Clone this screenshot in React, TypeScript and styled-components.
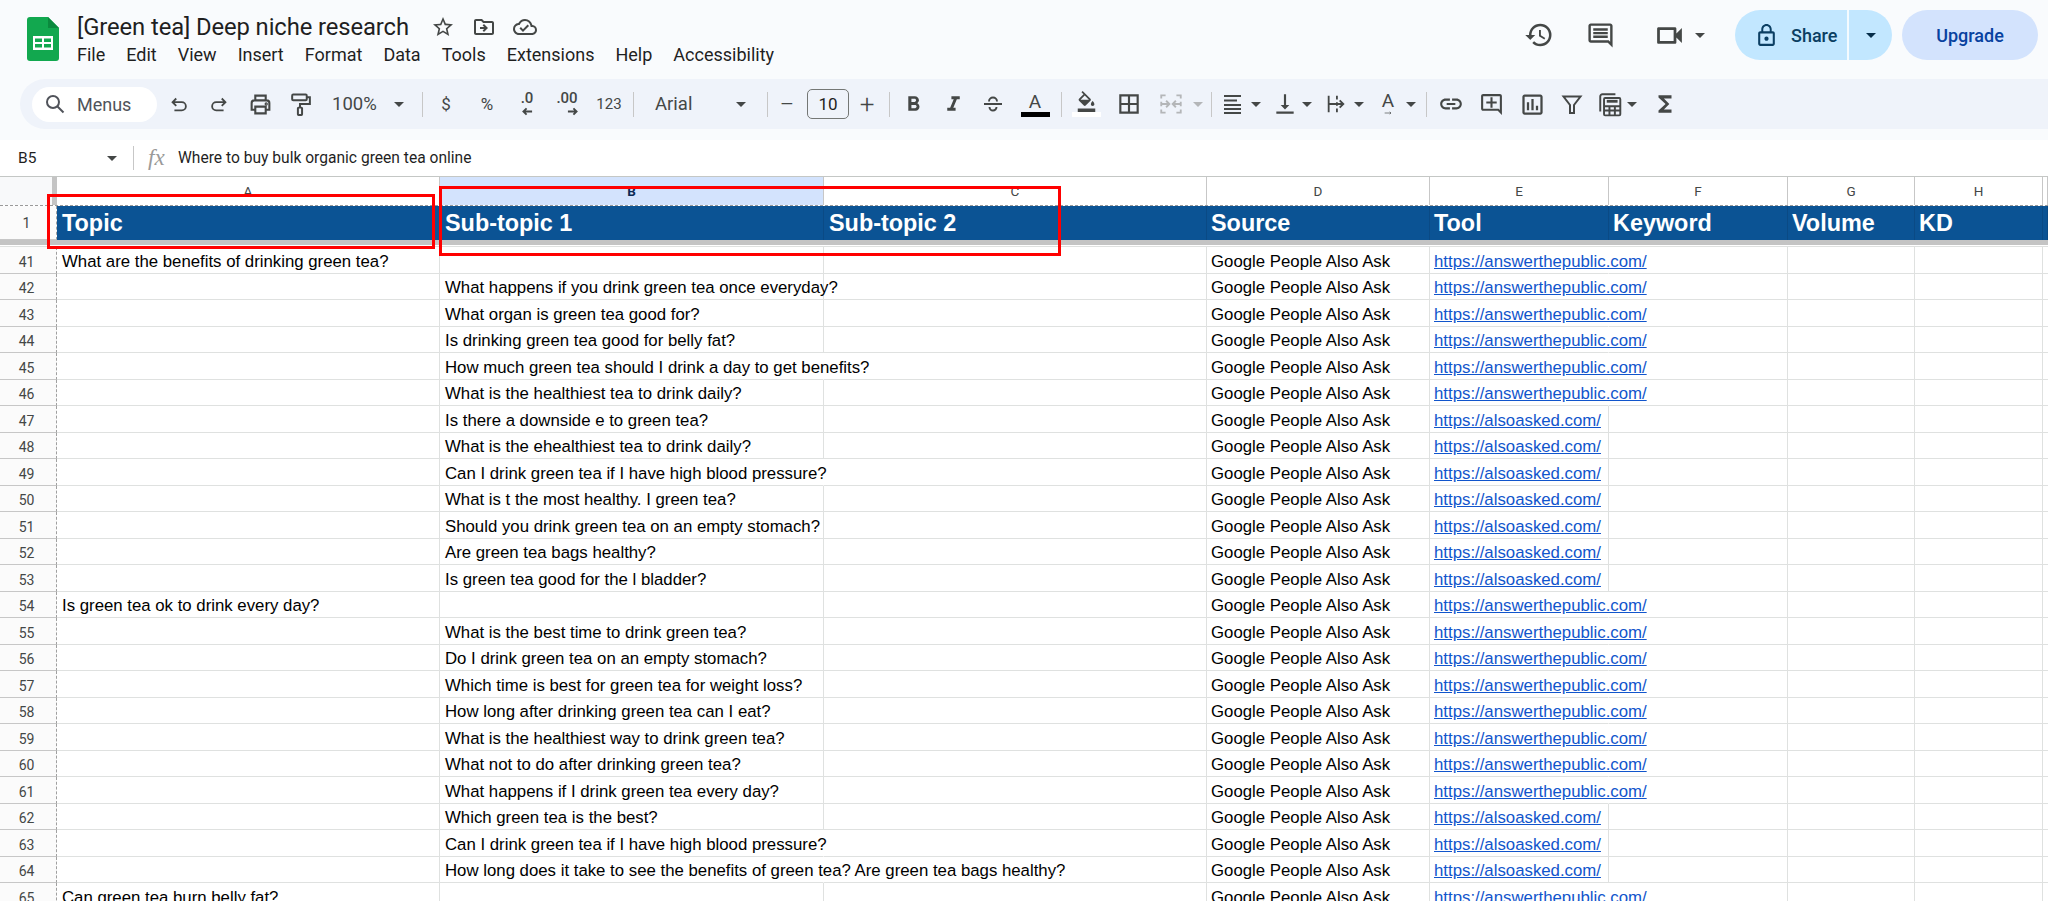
import React from "react";
import styled, { createGlobalStyle } from "styled-components";
import {
  MdOutlineStarBorder, MdOutlineDriveFileMove, MdOutlineCloudDone, MdHistory, MdOutlineComment,
  MdOutlineVideocam, MdLockOutline, MdFormatBold, MdFormatItalic, MdFormatColorFill, MdBorderAll,
  MdVerticalAlignBottom, MdLink, MdOutlineAddComment, MdOutlineInsertChart, MdFunctions,
} from "react-icons/md";

const Global = createGlobalStyle`
  html, body { margin: 0; padding: 0; background: #f9fbfd; overflow: hidden; }
  #root { height: 901px; }
  * { box-sizing: border-box; }
`;

const Page = styled.div`
  position: relative; width: 2048px; height: 901px; overflow: hidden;
  background: #f9fbfd; font-family: Roboto, "Liberation Sans", sans-serif; color: #1f1f1f;
`;
const TopBar = styled.header`
  display: flex; align-items: flex-start; height: 79px; padding: 10px 10px 0 27px;
`;
const Logo = styled.svg`margin-top: 7px; flex: none;`;
const TitleBlock = styled.div`margin: 2px 0 0 18px;`;
const TitleRow = styled.div`display: flex; align-items: center; height: 30px;`;
const Title = styled.span`font-size: 23.8px; line-height: 30px; letter-spacing: -0.1px;`;
const TitleIcons = styled.div`
  display: flex; align-items: center; gap: 17px; margin-left: 22px; color: #444746;
`;
const MenuBar = styled.nav`display: flex; gap: 21px; height: 26px; margin-top: 0; align-items: center;`;
const MenuItem = styled.span`font-size: 18px; line-height: 26px;`;
const RightCluster = styled.div`
  margin-left: auto; display: flex; align-items: center; height: 50px; color: #444746;
`;
const Action = styled.span<{ $ml?: number }>`
  display: flex; align-items: center; margin-left: ${(p) => p.$ml ?? 0}px;
`;
const SharePill = styled.div`
  display: flex; width: 157px; height: 50px; margin-left: 30px; border-radius: 25px;
  background: #c2e7ff; color: #001d35; overflow: hidden;
`;
const ShareMain = styled.div`
  display: flex; align-items: center; gap: 12px; width: 114px; padding-left: 19px;
  border-right: 2px solid #f4fbff; font-size: 18px; font-weight: 500; color: #0b3f63;
`;
const ShareCaret = styled.div`flex: 1; display: flex; align-items: center; justify-content: center;`;
const UpgradeBtn = styled.div`
  display: flex; align-items: center; justify-content: center; width: 136px; height: 50px;
  margin-left: 10px; border-radius: 25px; background: #d3e3fd; color: #0842a0;
  font-size: 18px; font-weight: 500;
`;
const Toolbar = styled.div`
  display: flex; align-items: center; height: 50px; margin: 0 0 11px 20px; padding-left: 12px;
  background: #eff3fa; border-radius: 25px 0 0 25px; color: #444746;
`;
const SearchPill = styled.div`
  display: flex; align-items: center; width: 125px; height: 35px; padding-left: 11px; gap: 10px;
  border-radius: 18px; background: #fff; font-size: 18px; color: #50535a; flex: none;
`;
const Tool = styled.div<{ $w: number }>`
  display: flex; align-items: center; justify-content: center; flex: none;
  width: ${(p) => p.$w}px; height: 36px; color: #444746;
`;
const TextTool = styled(Tool)<{ $size?: number; $thin?: boolean }>`
  font-size: ${(p) => p.$size ?? 17}px; font-weight: ${(p) => (p.$thin ? 300 : 400)};
`;
const Dropdown = styled.div<{ $w: number; $pl: number; $pr: number }>`
  display: flex; align-items: center; justify-content: space-between; flex: none;
  width: ${(p) => p.$w}px; padding: 0 ${(p) => p.$pr}px 0 ${(p) => p.$pl}px;
  font-size: 18.5px; color: #444746;
`;
const Sep = styled.div<{ $ml?: number }>`
  flex: none; width: 1px; height: 25px; background: #c7c7c7; margin-left: ${(p) => p.$ml ?? 0}px;
`;
const Caret = styled.span<{ $ml?: number; $off?: boolean; $dark?: boolean }>`
  flex: none; width: 0; height: 0; margin-left: ${(p) => p.$ml ?? 0}px; margin-right: 0;
  border-left: 5px solid transparent; border-right: 5px solid transparent;
  border-top: 5px solid ${(p) => (p.$off ? "#b4b6b8" : p.$dark ? "#062e4a" : "#444746")};
`;
const SizeBox = styled.div`
  flex: none; display: flex; align-items: center; justify-content: center; width: 42px; height: 30px;
  margin-left: 1px; border: 1px solid #747775; border-radius: 5px; font-size: 17px; color: #1f1f1f;
`;
const Decimal = styled.div`display: flex; flex-direction: column; align-items: flex-end; gap: 1px;`;
const DecimalText = styled.span`font-size: 15px; line-height: 13px; font-weight: 500; letter-spacing: 0;`;
const ColorStack = styled.div`display: flex; flex-direction: column; align-items: center; width: 29px;`;
const ColorLetter = styled.span`font-size: 19px; line-height: 21px; color: #444746;`;
const ColorBar = styled.span<{ $c: string }>`display: block; width: 29px; height: 5px; background: ${(p) => p.$c};`;
const RotateStack = styled.div`display: flex; flex-direction: column; align-items: center;`;
const RotateLetter = styled.span`font-size: 19px; line-height: 17px;`;

const FormulaBar = styled.div`
  display: flex; align-items: center; height: 36px; background: #fff; font-size: 15.6px; color: #1f1f1f;
`;
const CellName = styled.div`
  display: flex; align-items: center; justify-content: space-between; width: 134px; height: 24px;
  padding: 0 16px 0 18px; border-right: 1px solid #c7c7c7; font-size: 15.5px;
`;
const Fx = styled.span`
  margin-left: 14px; width: 30px; font-family: "Liberation Serif", serif; font-style: italic;
  font-size: 23px; line-height: 24px; color: #9a9a9a;
`;

const Sheet = styled.div`background: #fff; font-family: "Liberation Sans", Arial, sans-serif;`;
const COLS = "57px 383px 384px 383px 223px 179px 179px 127px 128px 5px";
const HeaderRow = styled.div`
  display: grid; grid-template-columns: ${COLS}; height: 30px;
  border-top: 1px solid #c4c7c5; border-bottom: 1px dashed #9a9a9a;
`;
const Corner = styled.div`background: #f8f9fa; border-right: 5px solid #c4c4c4;`;
const ColHead = styled.div<{ $on?: boolean }>`
  display: flex; align-items: center; justify-content: center; font-size: 13.5px;
  border-right: 1px solid #c7c7c7;
  background: ${(p) => (p.$on ? "#d3e3fd" : "#fff")};
  color: ${(p) => (p.$on ? "#0b2a55" : "#444746")};
  font-weight: ${(p) => (p.$on ? 700 : 400)};
  font-family: Roboto, sans-serif;
`;
const FrozenRow = styled.div`
  display: grid; grid-template-columns: ${COLS}; height: 39px;
  border-bottom: 5px solid #c4c4c4;
`;
const RowNum = styled.div`
  display: flex; align-items: center; justify-content: center; padding-right: 3px;
  font-family: Roboto, sans-serif; font-size: 14px; color: #444746; background: #fbfbfb;
  border-right: 1px dashed #a0a0a0; border-bottom: 1px solid #c7c7c7;
`;
const DataNum = styled(RowNum)`padding-top: 4px;`;
const BlueCell = styled.div<{ $tight?: boolean }>`
  display: flex; align-items: center; padding: 1px 0 0 ${(p) => (p.$tight ? 4 : 5)}px;
  background: #0b5394; color: #fff;
  font-weight: 700; font-size: 23.4px; border-right: 1px solid #0a4a85; white-space: nowrap; overflow: visible;
`;
const Gap = styled.div`height: 2px; border-bottom: 1px solid #dfe1e0;`;
const DataRow = styled.div`display: grid; grid-template-columns: ${COLS}; height: 26.5px;`;
const Cell = styled.div<{ $over?: boolean; $tight?: boolean }>`
  display: flex; align-items: center; padding: 4px 0 0 ${(p) => (p.$tight ? 4 : 5)}px;
  white-space: nowrap; overflow: visible;
  font-size: 16.8px; color: #000; min-width: 0;
  border-bottom: 1px solid #dfe1e0;
  border-right: 1px solid ${(p) => (p.$over ? "transparent" : "#dfe1e0")};
`;
const SheetLink = styled.span`color: #1155cc; text-decoration: underline;`;
const RedBox = styled.div<{ $l: number; $t: number; $w: number; $h: number }>`
  position: absolute; left: ${(p) => p.$l}px; top: ${(p) => p.$t}px;
  width: ${(p) => p.$w}px; height: ${(p) => p.$h}px;
  border: 3px solid #f00; pointer-events: none;
`;

const G = styled.svg.attrs({ viewBox: "0 0 24 24", fill: "none", stroke: "currentColor" })<{ $s?: number }>`
  width: ${(p) => p.$s ?? 24}px; height: ${(p) => p.$s ?? 24}px; flex: none; display: block;
`;

const Undo = () => (
  <G $s={22} strokeWidth={2}><path d="M9 6 5 10l4 4M5 10h10a4.5 4.5 0 0 1 0 9H7" /></G>
);
const Redo = () => (
  <G $s={22} strokeWidth={2}><path d="m15 6 4 4-4 4M19 10H9a4.5 4.5 0 0 0 0 9h8" /></G>
);
const Print = () => (
  <G $s={25} strokeWidth={2}>
    <path d="M7 8V3.5h10V8M7 17H3.5v-6.5A2.5 2.5 0 0 1 6 8h12a2.5 2.5 0 0 1 2.5 2.5V17H17" />
    <path d="M7 14h10v6.5H7z" /><circle cx="17.5" cy="11.5" r=".6" />
  </G>
);
const Paint = () => (
  <G $s={25} strokeWidth={1.9}>
    <rect x="4" y="2.5" width="14" height="5.5" rx="1" />
    <path d="M18 5h3v6.5h-9.5V15" /><rect x="9.5" y="15" width="4" height="7" rx=".6" />
  </G>
);
const Search = () => (
  <G $s={24} strokeWidth={2}><circle cx="10" cy="10" r="6" /><path d="m14.5 14.5 6 6" /></G>
);
const Strike = () => (
  <G $s={24} strokeWidth={1.9}><path d="M3 12h18M8 9.5a4 4 0 0 1 8 0M8.5 15a3.5 3.5 0 0 0 7 0" /></G>
);
const Merge = () => (
  <G $s={26} strokeWidth={1.7} style={{ color: "#b4b6b8" }}>
    <path d="M7 4H3v3M3 10v4M3 17v3h4M17 4h4v3M21 10v4M21 17v3h-4" />
    <path d="M3 12h7M7.5 9l3 3-3 3M21 12h-7M16.5 9l-3 3 3 3" />
  </G>
);
const AlignLeft = () => (
  <G $s={24} strokeWidth={2}><path d="M3 4h17M3 8.5h13M3 13h17M3 17h17M3 21h17" /></G>
);
const Wrap = () => (
  <G $s={22} strokeWidth={2}><path d="M4 3v18M13 3v4M13 10v4M13 17v4M4 12h16M16 8l4 4-4 4" /></G>
);
const Filter = () => (
  <G $s={24} strokeWidth={2}><path d="M3.5 4.5h17L14 13v8h-4v-8z" /></G>
);
const FnTable = () => (
  <G $s={26} strokeWidth={1.8}>
    <path d="M3 19V5a2 2 0 0 1 2-2h12" />
    <rect x="6.5" y="6.5" width="15" height="16" rx="1" />
    <path d="M9 9.5h10" strokeWidth={2.6} />
    <path d="M6.5 14h15M6.5 18h15M11.5 14v8.5M16.5 14v8.5" />
  </G>
);
const ArrowSmall = ({ left }: { left?: boolean }) => (
  <G $s={11} strokeWidth={4}>
    <path d={left ? "M22 12H3M10 5l-7 7 7 7" : "M2 12h19M14 5l7 7-7 7"} />
  </G>
);

const MENUS = ["File", "Edit", "View", "Insert", "Format", "Data", "Tools", "Extensions", "Help", "Accessibility"];
const COL_LETTERS = ["A", "B", "C", "D", "E", "F", "G", "H"];
const HEADS = ["Topic", "Sub-topic 1", "Sub-topic 2", "Source", "Tool", "Keyword", "Volume", "KD", ""];

const ATP = "https://answerthepublic.com/";
const AA = "https://alsoasked.com/";
type R = { n: number; a?: string; b?: string; over?: boolean; link: string };
const ROWS: R[] = [
  { n: 41, a: "What are the benefits of drinking green tea?", link: ATP },
  { n: 42, b: "What happens if you drink green tea once everyday?", link: ATP },
  { n: 43, b: "What organ is green tea good for?", link: ATP },
  { n: 44, b: "Is drinking green tea good for belly fat?", link: ATP },
  { n: 45, b: "How much green tea should I drink a day to get benefits?", over: true, link: ATP },
  { n: 46, b: "What is the healthiest tea to drink daily?", link: ATP },
  { n: 47, b: "Is there a downside e to green tea?", link: AA },
  { n: 48, b: "What is the ehealthiest tea to drink daily?", link: AA },
  { n: 49, b: "Can I drink green tea if I have high blood pressure?", over: true, link: AA },
  { n: 50, b: "What is t the most healthy. I green tea?", link: AA },
  { n: 51, b: "Should you drink green tea on an empty stomach?", link: AA },
  { n: 52, b: "Are green tea bags healthy?", link: AA },
  { n: 53, b: "Is green tea good for the l bladder?", link: AA },
  { n: 54, a: "Is green tea ok to drink every day?", link: ATP },
  { n: 55, b: "What is the best time to drink green tea?", link: ATP },
  { n: 56, b: "Do I drink green tea on an empty stomach?", link: ATP },
  { n: 57, b: "Which time is best for green tea for weight loss?", link: ATP },
  { n: 58, b: "How long after drinking green tea can I eat?", link: ATP },
  { n: 59, b: "What is the healthiest way to drink green tea?", link: ATP },
  { n: 60, b: "What not to do after drinking green tea?", link: ATP },
  { n: 61, b: "What happens if I drink green tea every day?", link: ATP },
  { n: 62, b: "Which green tea is the best?", link: AA },
  { n: 63, b: "Can I drink green tea if I have high blood pressure?", over: true, link: AA },
  { n: 64, b: "How long does it take to see the benefits of green tea? Are green tea bags healthy?", over: true, link: AA },
  { n: 65, a: "Can green tea burn belly fat?", link: ATP },
];

export default function App() {
  return (
    <Page>
      <Global />
      <TopBar>
        <Logo width="32" height="44" viewBox="0 0 32 44">
          <path d="M3 0h18l11 11v30a3 3 0 0 1-3 3H3a3 3 0 0 1-3-3V3a3 3 0 0 1 3-3z" fill="#12a84f" />
          <path d="M21 0l11 11H21z" fill="#0b8a3e" />
          <path d="M6 19h20v14H6z" fill="#fff" />
          <path d="M8 21.5h7v3.5H8zM17 21.5h7v3.5h-7zM8 27h7v3.5H8zM17 27h7v3.5h-7z" fill="#12a84f" />
        </Logo>
        <TitleBlock>
          <TitleRow>
            <Title>[Green tea] Deep niche research</Title>
            <TitleIcons>
              <MdOutlineStarBorder size={24} />
              <MdOutlineDriveFileMove size={24} />
              <MdOutlineCloudDone size={24} />
            </TitleIcons>
          </TitleRow>
          <MenuBar>
            {MENUS.map((m) => <MenuItem key={m}>{m}</MenuItem>)}
          </MenuBar>
        </TitleBlock>
        <RightCluster>
          <Action><MdHistory size={30} /></Action>
          <Action $ml={32}><MdOutlineComment size={29} /></Action>
          <Action $ml={38}><MdOutlineVideocam size={33} /></Action>
          <Action $ml={9}><Caret /></Action>
          <SharePill>
            <ShareMain>
              <MdLockOutline size={25} />
              <span>Share</span>
            </ShareMain>
            <ShareCaret><Caret $dark /></ShareCaret>
          </SharePill>
          <UpgradeBtn>Upgrade</UpgradeBtn>
        </RightCluster>
      </TopBar>

      <Toolbar>
        <SearchPill><Search /><span>Menus</span></SearchPill>
        <Tool $w={44}><Undo /></Tool>
        <Tool $w={36}><Redo /></Tool>
        <Tool $w={46}><Print /></Tool>
        <Tool $w={34}><Paint /></Tool>
        <Dropdown $w={105} $pl={15} $pr={18}><span>100%</span><Caret /></Dropdown>
        <Sep />
        <TextTool $w={46}>$</TextTool>
        <TextTool $w={36}>%</TextTool>
        <Tool $w={44}><Decimal><DecimalText>.0</DecimalText><ArrowSmall left /></Decimal></Tool>
        <Tool $w={36}><Decimal><DecimalText>.00</DecimalText><ArrowSmall /></Decimal></Tool>
        <TextTool $w={48} $size={15}>123</TextTool>
        <Sep />
        <Dropdown $w={133} $pl={21} $pr={21}><span>Arial</span><Caret /></Dropdown>
        <Sep />
        <TextTool $w={38} $size={26} $thin>−</TextTool>
        <SizeBox>10</SizeBox>
        <TextTool $w={36} $size={26} $thin>+</TextTool>
        <Sep $ml={4} />
        <Tool $w={46}><MdFormatBold size={25} /></Tool>
        <Tool $w={34}><MdFormatItalic size={25} /></Tool>
        <Tool $w={46}><Strike /></Tool>
        <Tool $w={38}><ColorStack><ColorLetter>A</ColorLetter><ColorBar $c="#000" /></ColorStack></Tool>
        <Sep $ml={7} />
        <Tool $w={48}>
          <ColorStack><MdFormatColorFill size={21} /><ColorBar $c="#fff" /></ColorStack>
        </Tool>
        <Tool $w={38}><MdBorderAll size={26} /></Tool>
        <Tool $w={45}><Merge /></Tool>
        <Caret $off />
        <Sep $ml={8} />
        <Tool $w={42}><AlignLeft /></Tool>
        <Caret $ml={-3} />
        <Tool $w={48}><MdVerticalAlignBottom size={26} /></Tool>
        <Caret $ml={-7} />
        <Tool $w={48}><Wrap /></Tool>
        <Caret $ml={-6} />
        <Tool $w={48}>
          <RotateStack><RotateLetter>A</RotateLetter><G $s={20} strokeWidth={2} style={{ height: 8 }} viewBox="0 8 24 8"><path d="M2 12h19M17 8.5l4 3.5-4 3.5" /></G></RotateStack>
        </Tool>
        <Caret $ml={-6} />
        <Sep $ml={10} />
        <Tool $w={48}><MdLink size={26} /></Tool>
        <Tool $w={32}><MdOutlineAddComment size={25} /></Tool>
        <Tool $w={50}><MdOutlineInsertChart size={27} /></Tool>
        <Tool $w={30}><Filter /></Tool>
        <Tool $w={46}><FnTable /></Tool>
        <Caret $ml={-6} />
        <Tool $w={56}><MdFunctions size={26} /></Tool>
      </Toolbar>

      <FormulaBar>
        <CellName><span>B5</span><Caret /></CellName>
        <Fx>fx</Fx>
        <span>Where to buy bulk organic green tea online</span>
      </FormulaBar>

      <Sheet>
        <HeaderRow>
          <Corner />
          {COL_LETTERS.map((c) => <ColHead key={c} $on={c === "B"}>{c}</ColHead>)}
          <ColHead />
        </HeaderRow>
        <FrozenRow>
          <RowNum>1</RowNum>
          {HEADS.map((h, i) => <BlueCell key={i} $tight={i >= 3}>{h}</BlueCell>)}
        </FrozenRow>
        <Gap />
        {ROWS.map((r) => (
          <DataRow key={r.n}>
            <DataNum>{r.n}</DataNum>
            <Cell>{r.a}</Cell>
            <Cell $over={r.over}>{r.b}</Cell>
            <Cell />
            <Cell $tight>Google People Also Ask</Cell>
            <Cell $tight $over={r.link === ATP}><SheetLink>{r.link}</SheetLink></Cell>
            <Cell />
            <Cell />
            <Cell />
            <Cell />
          </DataRow>
        ))}
      </Sheet>

      <RedBox $l={47} $t={194} $w={388} $h={55} />
      <RedBox $l={439} $t={186} $w={622} $h={70} />
    </Page>
  );
}
